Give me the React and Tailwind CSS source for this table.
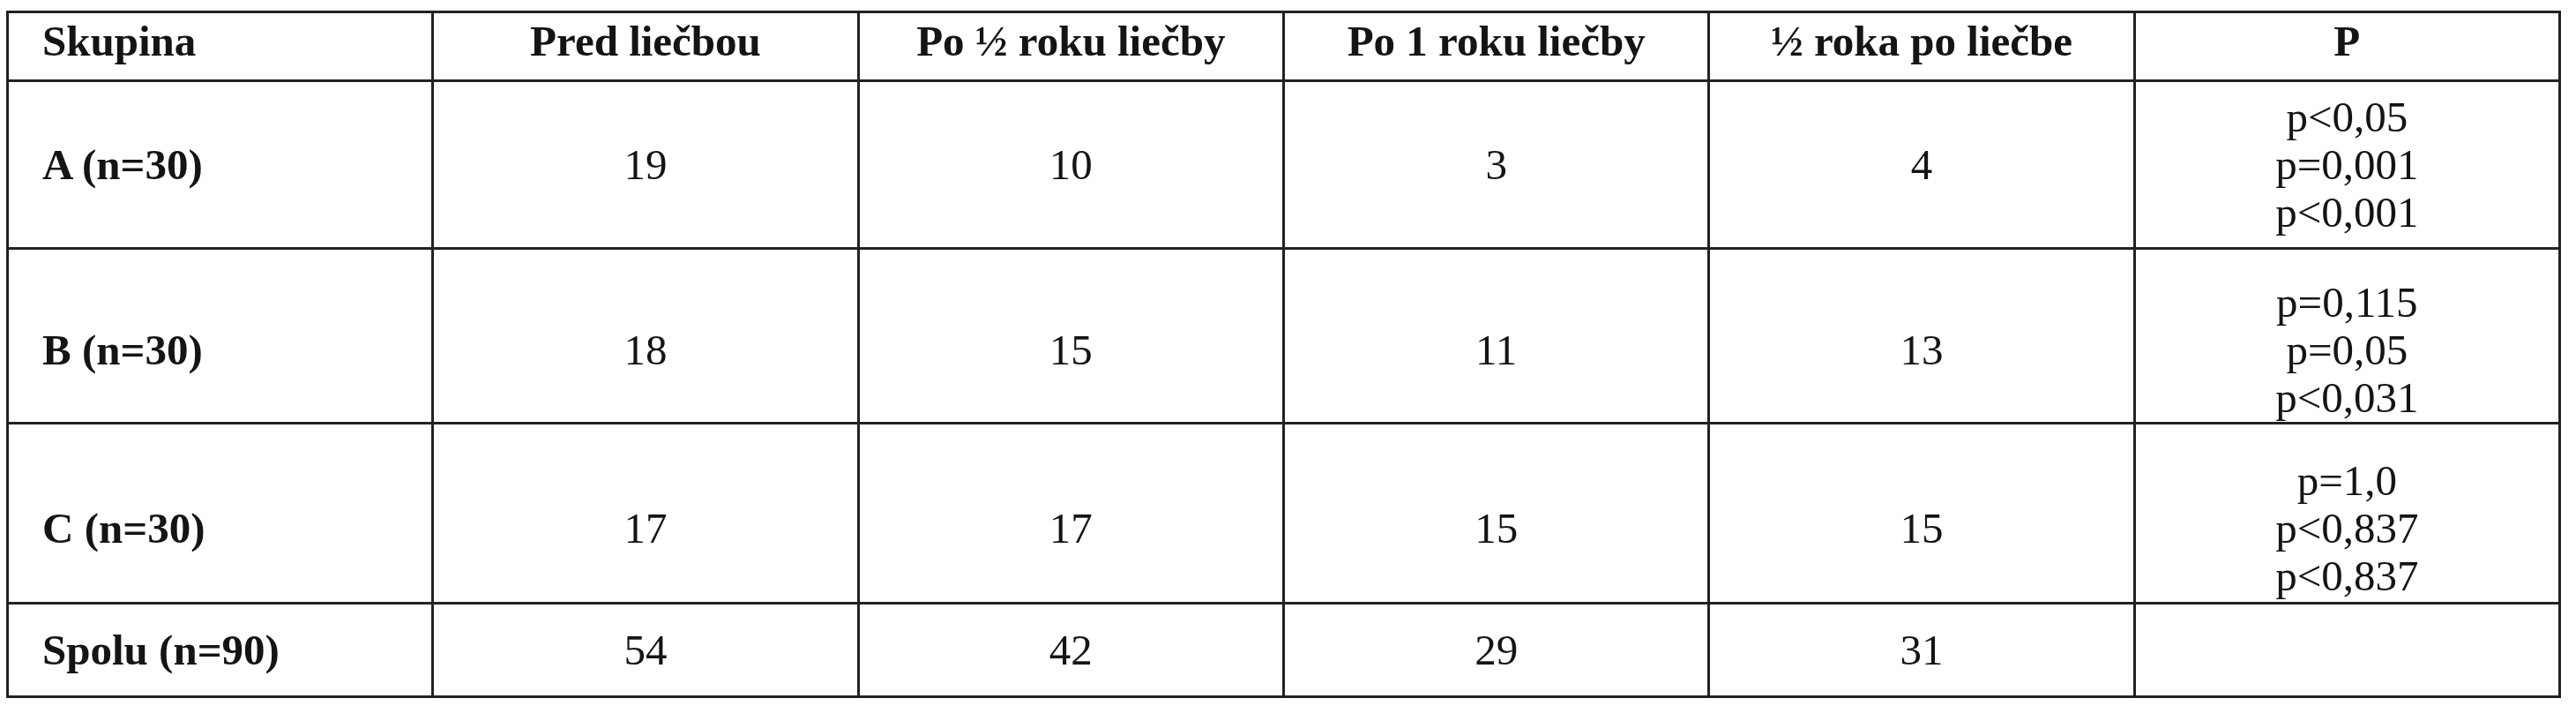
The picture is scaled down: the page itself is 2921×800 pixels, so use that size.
import React from 'react';

const headers = ['Skupina', 'Pred liečbou', 'Po ½ roku liečby', 'Po 1 roku liečby', '½ roka po liečbe', 'P'];

// row heights and text offsets follow the scanned table, which is not perfectly even
const rows = [
  { label: 'A (n=30)', values: ['19', '10', '3', '4'], p: ['p<0,05', 'p=0,001', 'p<0,001'], h: 'h-[190px]', pt: 'pt-[66px]', ppt: 'pt-[13px]' },
  { label: 'B (n=30)', values: ['18', '15', '11', '13'], p: ['p=0,115', 'p=0,05', 'p<0,031'], h: 'h-[196px]', pt: 'pt-[86px]', ppt: 'pt-[33px]' },
  { label: 'C (n=30)', values: ['17', '17', '15', '15'], p: ['p=1,0', 'p<0,837', 'p<0,837'], h: 'h-[204px]', pt: 'pt-[90px]', ppt: 'pt-[37px]' },
];

const cell = 'border-[3px] border-[#222] align-top';

export default function App() {
  return (
    <div className="w-[2921px] h-[800px] bg-white pt-[12px] pl-[7px] font-['Liberation_Serif',serif] text-[49px] leading-[56px] text-[#141414]">
      <table className="w-[2897px] table-fixed border-collapse">
        <thead>
          <tr className="h-[78px]">
            {headers.map((h, i) => (
              <th key={h} className={`${cell} font-bold pt-[4px] ${i === 0 ? 'text-left pl-[38px]' : 'text-center'}`}>
                {h}
              </th>
            ))}
          </tr>
        </thead>
        <tbody>
          {rows.map((row) => (
            <tr key={row.label} className={row.h}>
              <td className={`${cell} font-bold pl-[38px] ${row.pt}`}>{row.label}</td>
              {row.values.map((v, i) => (
                <td key={i} className={`${cell} text-center ${row.pt}`}>{v}</td>
              ))}
              <td className={`${cell} text-center leading-[54px] ${row.ppt}`}>
                {row.p.map((p, i) => (
                  <div key={i}>{p}</div>
                ))}
              </td>
            </tr>
          ))}
          <tr className="h-[106px]">
            <td className={`${cell} font-bold pl-[38px] pt-[24px]`}>Spolu (n=90)</td>
            {['54', '42', '29', '31'].map((v) => (
              <td key={v} className={`${cell} text-center pt-[24px]`}>{v}</td>
            ))}
            <td className={cell}></td>
          </tr>
        </tbody>
      </table>
    </div>
  );
}
